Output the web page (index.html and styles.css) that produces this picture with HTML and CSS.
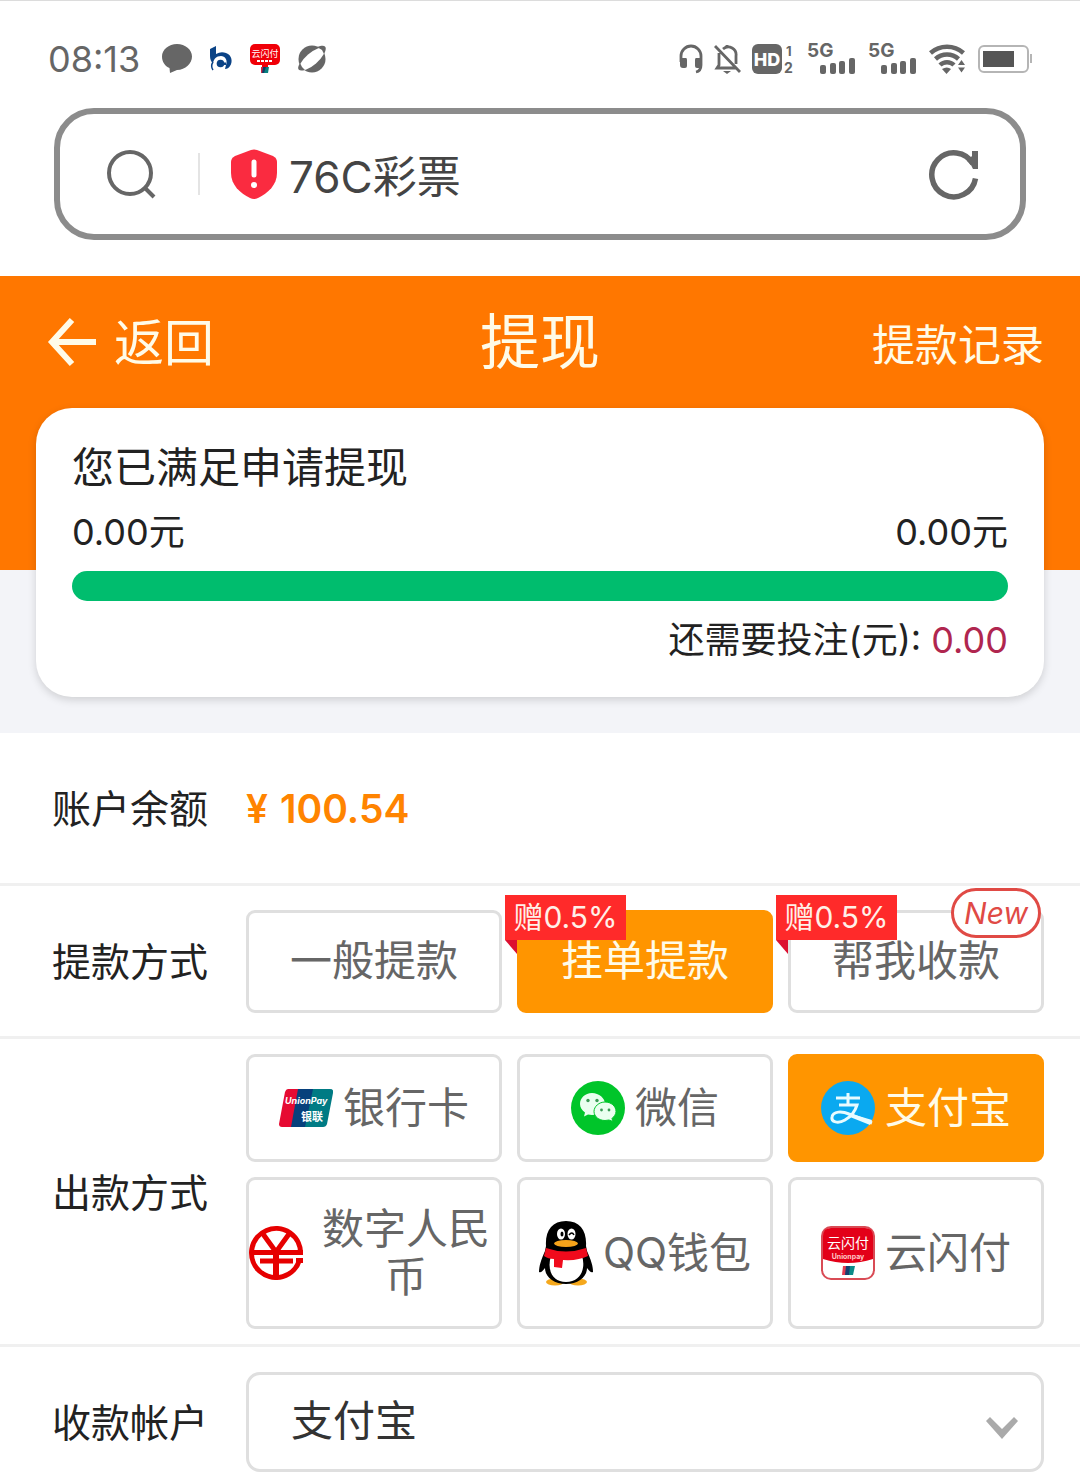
FILE: index.html
```html
<!DOCTYPE html>
<html lang="zh-CN">
<head>
<meta charset="utf-8">
<meta name="viewport" content="width=device-width, initial-scale=1">
<title>提现</title>
<link rel="stylesheet" href="styles.css">
</head>
<body>
<div class="status">
  <div class="status-left">
    <time class="clock">08:13</time>
    <svg width="30" height="30" viewBox="0 0 30 30" fill="#666"><path d="M15 0c8.300 0 15 5.600 15 12.500S23.500 26 15 26L8 29l-.5-5C3 22 0 18 0 12.500 0 5.600 6.700 0 15 0z"/></svg>
    <svg width="24" height="26" viewBox="0 0 24 26"><path d="M1 3l6-3v8q5-3 10-1c6 2 7 9 4 13-1 2-3 3-5 3l1-4c2-5-1-9-5-9-5 0-7 3-8 7-2-1-3-4-3-7z" fill="#0b4386"/><path d="M4 24c-2-3-2-5 0-8" fill="none" stroke="#0b4386" stroke-width="1.500"/><circle cx="11.500" cy="17.500" r="3.800" fill="#0b4386"/><path d="M11 16.500h6v2.500h-6z" fill="#0b4386"/></svg>
    <svg width="30" height="30" viewBox="0 0 30 30"><rect y="0" width="30" height="21" rx="5" fill="#f00008"/><text x="15" y="13" class="t-cjk" font-size="9" text-anchor="middle" fill="#fff">云闪付</text><path d="M7 17h16" stroke="#fff" stroke-width="2" stroke-dasharray="3 1"/><path d="M12 20h6v3h-6z" fill="#f00008"/><path d="M11 23h4v6h-4z" fill="#d62b45"/><path d="M13 23h4l-1 6h-4z" fill="#123a66"/><path d="M16 23h3l-1 6h-4z" fill="#078080"/></svg>
    <svg width="30" height="30" viewBox="0 0 30 30"><circle cx="15" cy="15" r="13.500" fill="#666"/><ellipse cx="15" cy="15" rx="16" ry="6" transform="rotate(-41 15 15)" fill="#fff"/><path d="M3 19c-3 5-3 9 5 7l-3-3zM20 3c8-3 11-1 7 7l-2-4z" fill="#666"/></svg>
  </div>
  <div class="status-right">
    <svg width="24" height="30" viewBox="0 0 24 30"><path d="M2 18v-6a10 10 0 0 1 20 0v9q0 6-5 7" fill="none" stroke="#666" stroke-width="2.800"/><path d="M1 14h6q1 0 1 2v6q0 2-2 2H4q-3 0-3-3zM23 14h-6q-1 0-1 2v6q0 2 2 2h2q3 0 3-3z" fill="#666"/></svg>
    <svg width="27" height="30" viewBox="0 0 27 30" fill="none" stroke="#666" stroke-width="2.800"><path d="M1 2l25 26M5 9v12l-2 3h19M9 5c6-5 14 0 13 7v8"/><path d="M9 27h8l-4 3z" fill="#666" stroke="none"/><path d="M13 1v3"/></svg>
    <svg width="44" height="40" viewBox="0 -5 44 40" class="t-ui" fill="#666"><rect width="30" height="30" rx="6"/><text x="15" y="22" font-size="18" font-weight="800" text-anchor="middle" fill="#fff">HD</text><text x="34" y="12" font-size="13" font-weight="700">1</text><text x="32" y="29" font-size="14" font-weight="700">2</text></svg>
    <svg width="50" height="44" viewBox="-1 -6 50 44" class="t-ui" fill="#666"><text x="-1" y="14" font-size="19" font-weight="700">5G</text><rect x="12" y="22" width="6" height="9" rx="2"/><rect x="22" y="20" width="6" height="11" rx="2"/><rect x="31" y="18" width="6" height="13" rx="2"/><rect x="41" y="15" width="6" height="16" rx="2"/></svg>
    <svg width="50" height="44" viewBox="-1 -6 50 44" class="t-ui" fill="#666"><text x="-1" y="14" font-size="19" font-weight="700">5G</text><rect x="12" y="22" width="6" height="9" rx="2"/><rect x="22" y="20" width="6" height="11" rx="2"/><rect x="31" y="18" width="6" height="13" rx="2"/><rect x="41" y="15" width="6" height="16" rx="2"/></svg>
    <svg width="38" height="30" viewBox="0 0 38 30" fill="none" stroke="#666" stroke-width="4.500"><path d="M1.500 9a25 25 0 0 1 33 0M6.500 15a17 17 0 0 1 23 0M11 21a10 10 0 0 1 14 0"/><path d="M13 25q5-3 9 0l-4.500 5z" fill="#666" stroke="none"/><path d="M27 21.500L32.500 13l5.500 8.500-5.500 8z" fill="#fff" stroke="none"/><path d="M29 21l3.500-5 3.500 5zM29 23.500l3.500 5 3.500-5z" fill="#666" stroke="none"/></svg>
    <svg width="54" height="28" viewBox="0 0 54 28"><rect x="1" y="1" width="49" height="26" rx="5" fill="#fff" stroke="#b5b5b5" stroke-width="2"/><rect x="5" y="6" width="31" height="16" fill="#555"/><path d="M53 9v9" stroke="#b5b5b5" stroke-width="2"/></svg>
  </div>
</div>

<form class="address">
  <button type="button" class="icon-btn" aria-label="搜索"><svg width="50" height="50" viewBox="0 0 50 50" fill="none" stroke="#666" stroke-width="4"><circle cx="23" cy="24" r="21"/><path d="M38 39l9 9"/></svg></button>
  <span class="divider"></span>
  <svg width="46" height="50" viewBox="0 0 46 50"><path d="M20 1q3-1 6 0l16 6q4 2 4 6v11c0 12-9 20-19 25q-4 2-8 0C9 44 0 36 0 24V13q0-4 4-6z" fill="#fa2b40"/><path d="M23 13v13" stroke="#fff" stroke-width="5" stroke-linecap="round"/><circle cx="23" cy="36" r="3" fill="#fff"/></svg>
  <input class="address-input" type="text" aria-label="地址" value="76C彩票">
  <button type="button" class="icon-btn" aria-label="刷新"><svg width="50" height="52" viewBox="0 0 50 52"><path d="M46.500 30.500A22 22 0 1 1 44 16" fill="none" stroke="#666" stroke-width="5.500"/><path d="M43 3h6v18h-5q-2-5-6-8l5-5z" fill="#666"/></svg></button>
</form>

<div class="hero">
  <header class="nav">
    <a class="nav-back" href="#"><svg width="50" height="50" viewBox="0 0 50 50" fill="none" stroke="#fffbe8" stroke-width="6"><path d="M25 3L5 25l20 22M5 25h44"/></svg><span class="nav-back-text">返回</span></a>
    <h1 class="nav-title">提现</h1>
    <a class="nav-record" href="#">提款记录</a>
  </header>
  <section class="card">
    <h2 class="card-title">您已满足申请提现</h2>
    <div class="amounts"><span>0.00元</span><span>0.00元</span></div>
    <div class="bar"></div>
    <p class="need">还需要投注(元): <span class="need-value">0.00</span></p>
  </section>
</div>

<main class="form">
  <div class="row">
    <span class="label">账户余额</span>
    <span class="balance"><span>¥</span><span>100.54</span></span>
  </div>
  <div class="row">
    <span class="label" id="mode">提款方式</span>
    <div class="options options-mode" role="group" aria-labelledby="mode">
      <button type="button" class="option">一般提款</button>
      <button type="button" class="option option-on"><span class="gift">赠0.5%</span>挂单提款</button>
      <button type="button" class="option"><span class="gift">赠0.5%</span><span class="new">New</span>帮我收款</button>
    </div>
  </div>
  <div class="row">
    <span class="label" id="pay">出款方式</span>
    <div class="options options-pay" role="group" aria-labelledby="pay">
      <button type="button" class="option">
        <svg width="54" height="54" viewBox="0 0 54 54"><path d="M9 8h16L17 46H3q-3 0-3-3L6 11q1-3 3-3z" fill="#e60a32"/><path d="M19 8h20L31 46H12z" fill="#07407c"/><path d="M34 8h17q4 0 3 4l-6 31q-1 3-4 3H26z" fill="#007b84"/><text x="6" y="23" class="t-ui" font-size="9" font-weight="700" font-style="italic" fill="#fff">UnionPay</text><text x="22" y="40" class="t-cjk" font-size="11" font-weight="700" fill="#fff">银联</text></svg>
        <span>银行卡</span></button>
      <button type="button" class="option">
        <svg width="54" height="54" viewBox="0 0 54 54"><circle cx="27" cy="27" r="27" fill="#00c52a"/><path d="M21 12c7 0 13 5 13 11s-6 11-13 11l-4-.5-4 2 1-4c-3-2-5-5-5-8.500C9 17 14 12 21 12z" fill="#eafff0"/><path d="M34 21c6 0 11 4 11 9.500 0 3-2 5-4 7l1 3-4-1.500-4 .5c-6 0-11-4-11-9s5-9.500 11-9.500z" fill="#eafff0" stroke="#00c52a"/><g fill="#3a9a55"><circle cx="17" cy="19.500" r="1.700"/><circle cx="26" cy="19.500" r="1.700"/><circle cx="30.500" cy="29" r="1.400"/><circle cx="38" cy="29" r="1.400"/></g></svg>
        <span>微信</span></button>
      <button type="button" class="option option-on">
        <svg width="54" height="54" viewBox="0 0 54 54"><circle cx="27" cy="27" r="27" fill="#0aa9f0"/><path d="M27 12v11M15 17h24M18 24h18q-3 10-12 15c-7 4-14 2-13-3 1-6 10-6 17-3l23 9" fill="none" stroke="#e8fbff" stroke-width="3"/><path d="M31 33l20 6-2 5-20-8z" fill="#e8fbff"/></svg>
        <span>支付宝</span></button>
      <button type="button" class="option">
        <svg width="54" height="54" viewBox="0 0 54 54" fill="none" stroke="#e60000" stroke-width="5"><path d="M51.500 28A24.500 24.500 0 1 0 50.500 34"/><path d="M14 8l13 18L40 8M3 26.500h51M11 35h33M47 34.500h7"/><path d="M27 24v27" stroke-width="6"/></svg>
        <span>数字人民币</span></button>
      <button type="button" class="option">
        <svg width="54" height="65" viewBox="0 0 54 65"><g fill="#f5a81c"><ellipse cx="16" cy="61" rx="9" ry="3.500"/><ellipse cx="39" cy="61" rx="9" ry="3.500"/></g><path d="M27 0C41 0 48 10 47 25l1 5c4 9 6 15 6 21-3 1-4-2-6-4 0 9-9 16-21 16S6 56 6 47c-2 2-3 5-6 4 0-6 2-12 6-21l1-5C6 10 13 0 27 0z" fill="#000"/><path d="M12 35h31c4 12-1 26-16 26S8 47 12 35z" fill="#fff"/><path d="M7 27q20 7 40 0l2 8q-10 5-25 4l-1 8-8-1v-8q-6 0-10-3z" fill="#f00a1c"/><ellipse cx="22" cy="13" rx="4" ry="5.500" fill="#fff"/><ellipse cx="32.500" cy="13" rx="4" ry="5.500" fill="#fff"/><ellipse cx="23" cy="13" rx="1.500" ry="2.500"/><path d="M30 14q3-4 5 0" fill="none" stroke="#000" stroke-width="1.500"/><ellipse cx="27" cy="22.500" rx="12" ry="3.500" fill="#f7a31a"/></svg>
        <span>QQ钱包</span></button>
      <button type="button" class="option">
        <svg width="54" height="54" viewBox="0 0 54 54"><rect x="1" y="1" width="52" height="52" rx="9" fill="#fff" stroke="#d94b55" stroke-width="2"/><path d="M2 33V10q0-8 8-8h34q8 0 8 8v23q-25 8-50 0z" fill="#e30018"/><text x="27" y="22" class="t-cjk" font-size="14" text-anchor="middle" fill="#fff">云闪付</text><text x="27" y="33" class="t-ui" font-size="7" font-weight="700" text-anchor="middle" fill="#ffc9c9">Unionpay</text><path d="M22 40h4l-1 9h-4z" fill="#e23b52"/><path d="M25 40h5l-1 9h-5z" fill="#143f70"/><path d="M29 40h5l-2 9h-4z" fill="#0b8a88"/></svg>
        <span>云闪付</span></button>
    </div>
  </div>
  <div class="row row-last">
    <label class="label" for="account">收款帐户</label>
    <div class="select-wrap">
      <select class="select" id="account"><option>支付宝</option></select>
      <svg class="chevron" width="34" height="22" viewBox="0 0 34 22"><path d="M1 4l4-4 12 12L29 0l4 4-16 18z" fill="#aaa"/></svg>
    </div>
  </div>
</main>
</body>
</html>
```
FILE: styles.css
```css
* { box-sizing: border-box; }
body {
  margin: 0;
  border-top: 1px solid #dcdcdc;
  background: #fff;
  color: #222;
  font-family: Inter, "Noto Sans CJK SC", sans-serif;
  font-size: 36px;
}
svg { display: block; flex: none; }
button, input, select { font: inherit; color: inherit; }
button { padding: 0; cursor: pointer; }
a { color: inherit; text-decoration: none; }
h1, h2, p { margin: 0; font-weight: 400; }
.t-ui { font-family: Inter, sans-serif; }
.t-cjk { font-family: "Noto Sans CJK SC", sans-serif; }

.status {
  display: flex;
  justify-content: space-between;
  align-items: center;
  height: 107px;
  padding: 8px 48px 0;
}
.status-left, .status-right { display: flex; align-items: center; }
.status-left { gap: 17px; }
.status-right { gap: 11px; }
.clock { margin-right: 5px; color: #666; font-size: 36px; }

.address {
  display: flex;
  align-items: center;
  height: 132px;
  margin: 0 54px 36px;
  padding: 0 41px 0 47px;
  border: 6px solid #8c8c8c;
  border-radius: 40px;
}
.icon-btn { border: 0; background: none; }
.divider { width: 2px; height: 42px; margin: 0 31px 0 41px; background: #e4e4e4; }
.address-input {
  flex: 1;
  min-width: 0;
  margin-left: 12px;
  padding: 0;
  border: 0;
  outline: 0;
  background: none;
  color: #444;
  font-size: 44px;
}

.hero {
  padding: 0 36px 36px;
  background: linear-gradient(#ff7700 294px, #f3f4f8 294px);
}
.nav {
  display: grid;
  grid-template-columns: 1fr auto 1fr;
  align-items: center;
  height: 132px;
  color: #fffbe8;
}
.nav-back { display: flex; align-items: center; gap: 17px; padding-left: 11px; font-size: 50px; }
.nav-back-text { padding-bottom: 6px; }
.nav-title { font-size: 60px; line-height: 72px; }
.nav-record { justify-self: end; font-size: 43px; }
.card {
  padding: 28px 36px 25px;
  border-radius: 36px;
  background: #fff;
  box-shadow: 0 3px 9px rgba(0, 0, 0, .15);
  line-height: 64px;
}
.card-title { font-size: 42px; }
.amounts { display: flex; justify-content: space-between; }
.bar { height: 30px; margin: 7px 0; border-radius: 15px; background: #00bd6e; }
.need { text-align: right; }
.need-value { color: #b0264f; }

.row {
  display: grid;
  grid-template-columns: 194px 1fr;
  align-items: center;
  min-height: 153px;
  padding: 15px 36px 15px 52px;
  border-bottom: 3px solid #f0f0f0;
}
.row-last { min-height: 0; padding-top: 25px; padding-bottom: 8px; border-bottom: 0; }
.label { padding-bottom: 4px; font-size: 39px; }
.balance { display: flex; gap: 12px; color: #ff8400; font-size: 39px; font-weight: 600; }
.options { display: grid; grid-template-columns: repeat(3, 1fr); gap: 15px; }
.options-mode { grid-auto-rows: 103px; }
.options-pay { grid-template-rows: 108px 152px; }
.option {
  position: relative;
  display: flex;
  align-items: center;
  justify-content: center;
  gap: 10px;
  border: 3px solid #dfdfdf;
  border-radius: 9px;
  background: #fff;
  color: #666;
  font-size: 42px;
  line-height: 48px;
}
.option-on { border-color: #ff9500; background: #ff9500; color: #fffbe8; }
.gift {
  position: absolute;
  top: -18px;
  left: -15px;
  width: 121px;
  background: #ff2a2a;
  color: #fff0e8;
  font-size: 30px;
  line-height: 45px;
}
.gift::after {
  content: "";
  position: absolute;
  top: 100%;
  left: 0;
  border-top: 14px solid #dc1030;
  border-left: 12px solid transparent;
}
.new {
  position: absolute;
  top: -25px;
  right: 0;
  width: 90px;
  border: 3px solid #e04a45;
  border-radius: 25px;
  background: #fff;
  color: #e04a45;
  font-size: 30px;
  font-style: italic;
  line-height: 44px;
}
.select-wrap { position: relative; }
.select {
  display: block;
  width: 100%;
  height: 100px;
  padding: 0 80px 4px 42px;
  border: 3px solid #dfdfdf;
  border-radius: 14px;
  appearance: none;
  background: #fff;
  color: #333;
  font-size: 42px;
}
.chevron { position: absolute; top: 45px; right: 25px; pointer-events: none; }
```
